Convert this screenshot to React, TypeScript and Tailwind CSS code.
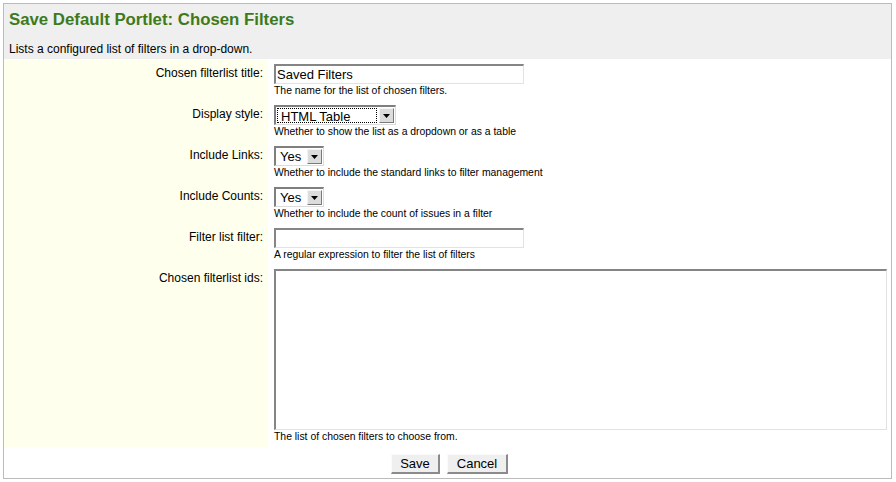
import React from "react";

const font = { fontFamily: '"Liberation Sans", Arial, Helvetica, sans-serif' };

function Arrow() {
  return (
    <div className="ml-auto mr-[1px] mt-[1px] h-[15px] w-[15px] border border-t-[#f4f4f4] border-l-[#f4f4f4] border-r-[#7a7a7a] border-b-[#7a7a7a] bg-[#dcdcdc] flex items-center justify-center">
      <svg width="7" height="4" viewBox="0 0 7 4">
        <polygon points="0,0 7,0 3.5,4" fill="#000" />
      </svg>
    </div>
  );
}

function Select({ w, value, focus }: { w: string; value: string; focus?: boolean }) {
  return (
    <div className={`${w} h-[20px] flex items-start border-t-2 border-l-2 border-t-[#7f7f7f] border-l-[#7f7f7f] border-r border-b border-r-[#dcdcdc] border-b-[#dcdcdc] bg-white`}>
      <div
        className={`ml-[1px] mt-[1px] h-[15px] px-[3px] text-[13px] leading-[15px] text-black ${
          focus ? "border border-dotted border-black flex-1 mr-[2px] px-[2px]" : ""
        }`}
      >
        {value}
      </div>
      <Arrow />
    </div>
  );
}

function TextInput({ value }: { value?: string }) {
  return (
    <div className="w-[250px] h-[20px] border-t-2 border-l-2 border-t-[#858585] border-l-[#858585] border-r border-b border-r-[#e2e2e2] border-b-[#e2e2e2] bg-white px-[1px] text-[13px] leading-[17px] text-black">
      {value}
    </div>
  );
}

function Row({
  label,
  control,
  desc,
  h = "h-[41px]",
}: {
  label: string;
  control: React.ReactNode;
  desc: string;
  h?: string;
}) {
  return (
    <div className={`flex ${h}`}>
      <div className="w-[264px] shrink-0 bg-[#ffffee] pr-[5px] pt-[7px] text-right text-[12px] leading-[15px] text-black">
        {label}
      </div>
      <div className="pl-[6px] pt-[5px] flex-1">
        {control}
        <div className="mt-[1px] text-[10.4px] leading-[12px] text-black">{desc}</div>
      </div>
    </div>
  );
}

export default function App() {
  return (
    <div className="w-[896px] h-[482px] bg-white pt-[3px] pl-[3px]" style={font}>
      <div className="w-[889px] h-[476px] border border-[#bbbbbb] flex flex-col">
        <div className="bg-[#efefef] h-[55px] px-[5px] pt-[6px]">
          <div className="text-[16.8px] leading-[20px] font-bold text-[#3d7a1c]">
            Save Default Portlet: Chosen Filters
          </div>
          <div className="mt-[12px] text-[12px] leading-[15px] text-black">
            Lists a configured list of filters in a drop-down.
          </div>
        </div>
        <Row label="Chosen filterlist title:" control={<TextInput value="Saved Filters" />} desc="The name for the list of chosen filters." />
        <Row label="Display style:" control={<Select w="w-[122px]" value="HTML Table" focus />} desc="Whether to show the list as a dropdown or as a table" />
        <Row label="Include Links:" control={<Select w="w-[50px]" value="Yes" />} desc="Whether to include the standard links to filter management" />
        <Row label="Include Counts:" control={<Select w="w-[50px]" value="Yes" />} desc="Whether to include the count of issues in a filter" />
        <Row label="Filter list filter:" control={<TextInput />} desc="A regular expression to filter the list of filters" />
        <Row
          label="Chosen filterlist ids:"
          h="h-[183px]"
          control={
            <div className="w-[613px] h-[161px] border-t-2 border-l-2 border-t-[#858585] border-l-[#858585] border-r border-b border-r-[#e2e2e2] border-b-[#e2e2e2] bg-white" />
          }
          desc="The list of chosen filters to choose from."
        />
        <div className="flex justify-center gap-[7px] pt-[7px] pl-[4px]">
          <div className="w-[49px] h-[20px] bg-[#efefef] border border-t-[#fafafa] border-l-[#fafafa] border-r-2 border-b-2 border-r-[#8a8a8a] border-b-[#8a8a8a] text-[13px] leading-[17px] text-center text-black">
            Save
          </div>
          <div className="w-[61px] h-[20px] bg-[#efefef] border border-t-[#fafafa] border-l-[#fafafa] border-r-2 border-b-2 border-r-[#8a8a8a] border-b-[#8a8a8a] text-[13px] leading-[17px] text-center text-black">
            Cancel
          </div>
        </div>
      </div>
    </div>
  );
}
